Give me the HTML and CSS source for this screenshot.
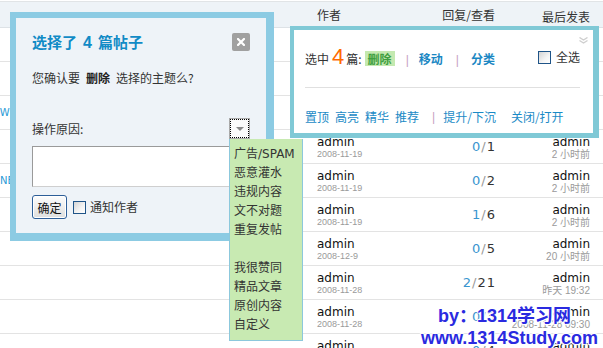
FILE: index.html
```html
<!DOCTYPE html>
<html lang="zh-CN">
<head>
    <meta charset="UTF-8">
    <meta name="viewport" content="width=device-width, initial-scale=1.0">
    <title>批量管理 - 删除主题</title>
    <link rel="stylesheet" href="styles.css">
</head>
<body>

    <!-- 主题列表 -->
    <div class="threadlist">
        <div class="th">
            <span></span>
            <span>作者</span>
            <span class="num">回复/查看</span>
            <span class="last">最后发表</span>
        </div>
        <div class="tr">
            <div class="subject"></div>
            <div class="author"><cite>admin</cite><em>2008-11-19</em></div>
            <div class="nums"><b>0</b>/<i>3</i></div>
            <div class="last"><cite>admin</cite><em>2 小时前</em></div>
        </div>
        <div class="tr">
            <div class="subject"></div>
            <div class="author"><cite>admin</cite><em>2008-11-19</em></div>
            <div class="nums"><b>0</b>/<i>4</i></div>
            <div class="last"><cite>admin</cite><em>2 小时前</em></div>
        </div>
        <div class="tr">
            <div class="subject"><span class="tag cut">NEW</span></div>
            <div class="author"><cite>admin</cite><em>2008-11-19</em></div>
            <div class="nums"><b>0</b>/<i>2</i></div>
            <div class="last"><cite>admin</cite><em>2 小时前</em></div>
        </div>
        <div class="tr">
            <div class="subject"></div>
            <div class="author"><cite>admin</cite><em>2008-11-19</em></div>
            <div class="nums"><b>0</b>/<i>1</i></div>
            <div class="last"><cite>admin</cite><em>2 小时前</em></div>
        </div>
        <div class="tr">
            <div class="subject"><span class="tag">NEW</span></div>
            <div class="author"><cite>admin</cite><em>2008-11-19</em></div>
            <div class="nums"><b>0</b>/<i>2</i></div>
            <div class="last"><cite>admin</cite><em>2 小时前</em></div>
        </div>
        <div class="tr">
            <div class="subject"></div>
            <div class="author"><cite>admin</cite><em>2008-11-19</em></div>
            <div class="nums"><b>1</b>/<i>6</i></div>
            <div class="last"><cite>admin</cite><em>2 小时前</em></div>
        </div>
        <div class="tr">
            <div class="subject"></div>
            <div class="author"><cite>admin</cite><em>2008-12-9</em></div>
            <div class="nums"><b>0</b>/<i>5</i></div>
            <div class="last"><cite>admin</cite><em>20 小时前</em></div>
        </div>
        <div class="tr">
            <div class="subject"></div>
            <div class="author"><cite>admin</cite><em>2008-11-28</em></div>
            <div class="nums"><b>2</b>/<i>21</i></div>
            <div class="last"><cite>admin</cite><em>昨天 19:32</em></div>
        </div>
        <div class="tr">
            <div class="subject"></div>
            <div class="author"><cite>admin</cite><em>2008-11-28</em></div>
            <div class="nums"><b>0</b>/<i>3</i></div>
            <div class="last"><cite>admin</cite><em>2008-11-28 09:30</em></div>
        </div>
        <div class="tr">
            <div class="subject"></div>
            <div class="author"><cite>admin</cite><em>2008-11-28</em></div>
            <div class="nums"><b>0</b>/<i>4</i></div>
            <div class="last"><cite>admin</cite><em>2008-11-28 09:12</em></div>
        </div>
    </div>

    <!-- 删除确认对话框 -->
    <div class="dialog">
        <div class="dialog-title">
            <h3>选择了<span class="count">4</span>篇帖子</h3>
            <a class="close">
                <svg width="8" height="8" viewBox="0 0 8 8"><path d="M1 1L7 7M7 1L1 7" stroke="#fff" stroke-width="2.2" stroke-linecap="square"/></svg>
            </a>
        </div>
        <p class="confirm">您确认要<strong>删除</strong>选择的主题么?</p>
        <div class="reason-head">
            <label>操作原因:</label>
            <div class="reason-select">
                <span class="arrow"></span>
                <ul class="reason-menu">
                    <li>广告/SPAM</li>
                    <li>恶意灌水</li>
                    <li>违规内容</li>
                    <li>文不对题</li>
                    <li>重复发帖</li>
                    <li></li>
                    <li>我很赞同</li>
                    <li>精品文章</li>
                    <li>原创内容</li>
                    <li>自定义</li>
                </ul>
            </div>
        </div>
        <textarea class="reason"></textarea>
        <div class="dialog-foot">
            <button class="btn">确定</button>
            <span class="check"></span>
            <label>通知作者</label>
        </div>
    </div>

    <!-- 管理面板 -->
    <div class="modpanel">
        <span class="fold">
            <svg width="9" height="7" viewBox="0 0 9 7"><path d="M0.5 0.5L4.5 3L8.5 0.5M0.5 3.5L4.5 6L8.5 3.5" fill="none" stroke="#cfcfcf" stroke-width="1.4"/></svg>
        </span>
        <div class="mod-row">
            <span>选中</span><strong class="big">4</strong><span>篇:</span>
            <a class="act on">删除</a><span class="sep">|</span><a class="act">移动</a><span class="sep wide">|</span><a class="act">分类</a>
            <label class="all"><span class="check"></span>全选</label>
        </div>
        <div class="mod-line"></div>
        <div class="mod-row2">
            <a>置顶</a><a>高亮</a><a>精华</a><a>推荐</a><span class="sep">|</span><a>提升/下沉</a><a class="gap">关闭/打开</a>
        </div>
    </div>

    <!-- 水印 -->
    <div class="watermark">
        <div class="by">by：1314学习网</div>
        <div>www.1314Study.com</div>
    </div>

</body>
</html>
```

FILE: styles.css
```css
/* Estilos generales */
html, body {
    margin: 0;
    padding: 0;
    overflow: hidden;
}

body {
    font-family: "DejaVu Sans", "Noto Sans CJK SC", sans-serif;
    font-size: 12px;
    color: #333;
    background-color: #fff;
    position: relative;
    width: 603px;
    height: 348px;
}

a {
    cursor: pointer;
}

/* Lista de temas */
.threadlist {
    padding-top: 1px;
}

.th, .tr {
    display: grid;
    grid-template-columns: 317px 1fr 70px 95px;
    padding-right: 13px;
}

.th {
    height: 25px;
    align-items: center;
    background-color: #eef3f7;
    border-top: 1px solid #e1e4e6;
    border-bottom: 1px solid #dde2e6;
    line-height: 16px;
    font-family: "Noto Sans CJK SC", sans-serif;
}

.th .num, .th .last {
    text-align: right;
}

.tr {
    height: 33px;
    border-bottom: 1px solid #e3e3e3;
}

.subject {
    align-self: center;
    line-height: 12px;
}

.tag {
    font-size: 10px;
    color: #2a9ad6;
}

.tag.cut {
    margin-left: -14px;
}

.author, .last {
    padding-top: 5px;
}

.tr cite {
    display: block;
    font-style: normal;
    font-size: 12px;
    line-height: 14px;
    color: #111;
}

.author em {
    display: block;
    font-style: normal;
    font-family: "Liberation Sans", sans-serif;
    font-size: 9px;
    line-height: 11px;
    color: #9a9a9a;
}

.last {
    text-align: right;
}

.last em {
    display: block;
    font-style: normal;
    font-family: "Liberation Sans", "Noto Sans CJK SC", sans-serif;
    font-size: 10px;
    line-height: 12px;
    color: #9a9a9a;
}

.nums {
    align-self: center;
    text-align: right;
    font-size: 13px;
    line-height: 16px;
    letter-spacing: 1px;
    margin-right: -1px;
    color: #999;
}

.nums b {
    font-weight: normal;
    color: #3a95cf;
}

.nums i {
    font-style: normal;
    color: #333;
}

/* Dialogo de confirmacion */
.dialog {
    position: absolute;
    left: 10px;
    top: 12px;
    width: 264px;
    height: 229px;
    box-sizing: border-box;
    border-style: solid;
    border-color: #8ccbe3;
    border-width: 6px 8px 8px 6px;
    background-color: #eef3f8;
    padding: 14px 16px 0 16px;
    font-family: "Noto Sans CJK SC", sans-serif;
    z-index: 2;
}

.dialog-title {
    display: flex;
    justify-content: space-between;
    align-items: center;
    height: 20px;
}

.dialog-title h3 {
    margin: 0;
    font-size: 15px;
    line-height: 20px;
    font-weight: bold;
    color: #118bc6;
}

.dialog-title .count {
    font-family: "Liberation Sans", sans-serif;
    font-size: 16px;
    margin: 0 6px;
}

.close {
    width: 18px;
    height: 18px;
    border-radius: 2px;
    background-color: #a0a0a0;
    display: flex;
    align-items: center;
    justify-content: center;
}

.confirm {
    margin: 17px 0 0;
    line-height: 18px;
    color: #333;
}

.confirm strong {
    margin: 0 6px;
    color: #222;
}

.reason-head {
    margin-top: 31px;
    height: 21px;
    display: flex;
    justify-content: space-between;
    align-items: center;
}

.reason-head label {
    line-height: 16px;
}

.reason-select {
    position: relative;
    width: 21px;
    height: 21px;
    box-sizing: border-box;
    border: 1px solid #a9a9a9;
    background-color: #fbfbfb;
}

.reason-select::before {
    content: "";
    position: absolute;
    inset: 0;
    border: 1px dotted #000;
}

.arrow {
    position: absolute;
    left: 6px;
    top: 8px;
    border-top: 4px solid #8a8a8a;
    border-left: 4px solid transparent;
    border-right: 4px solid transparent;
}

.reason-menu {
    position: absolute;
    top: 20px;
    left: -1px;
    width: 74px;
    box-sizing: border-box;
    margin: 0;
    padding: 6px 0 5px 4px;
    list-style: none;
    background-color: #c8eab2;
    border: 1px solid #8cc8dc;
    border-top: none;
}

.reason-menu li {
    height: 19px;
    line-height: 19px;
    white-space: nowrap;
    color: #333;
    font-family: "DejaVu Sans", "Noto Sans CJK SC", sans-serif;
}

.reason {
    display: block;
    margin: 7px 0 0;
    width: 218px;
    height: 41px;
    box-sizing: border-box;
    border: 1px solid;
    border-color: #9a9a9a #cfcfcf #cfcfcf #9a9a9a;
    background-color: #fff;
    padding: 0;
    resize: none;
}

.dialog-foot {
    margin-top: 8px;
    height: 24px;
    display: flex;
    align-items: center;
}

.btn {
    width: 35px;
    height: 24px;
    padding: 0;
    border: 1px solid #2d5e98;
    border-radius: 3px;
    background: linear-gradient(#fdfdfd, #dedede);
    box-shadow: inset 0 0 0 1px #fff;
    font-family: "Noto Sans CJK SC", sans-serif;
    font-size: 12px;
    color: #111;
}

.check {
    display: inline-block;
    width: 13px;
    height: 13px;
    box-sizing: border-box;
    border: 1px solid #1f5488;
    background: linear-gradient(135deg, #d4d4d4, #f4f4f4 60%, #fff);
}

.dialog-foot .check {
    margin-left: 6px;
}

.dialog-foot label {
    margin-left: 4px;
    line-height: 16px;
}

/* Panel de gestion */
.modpanel {
    position: absolute;
    left: 290px;
    top: 26px;
    width: 309px;
    height: 112px;
    box-sizing: border-box;
    border-style: solid;
    border-color: #80c9d6;
    border-width: 4px 6px 5px 4px;
    background-color: #fff;
    padding: 17px 13px 0 11px;
    font-family: "Noto Sans CJK SC", sans-serif;
    z-index: 2;
}

.fold {
    position: absolute;
    top: 7px;
    right: 5px;
    line-height: 0;
}

.mod-row {
    display: flex;
    align-items: baseline;
    height: 20px;
    line-height: 20px;
}

.big {
    font-family: "Liberation Sans", sans-serif;
    font-weight: normal;
    font-size: 22px;
    color: #ff6a00;
    margin: 0 2px 0 3px;
}

.act {
    font-weight: bold;
    color: #1a87c3;
}

.act.on {
    margin-left: 3px;
    padding: 1px 3px;
    line-height: 13px;
    background-color: #c4e9b0;
    color: #3f9f3f;
}

.sep {
    font-family: "Liberation Sans", sans-serif;
    color: #c7a1c2;
    margin: 0 10px 0 11px;
}

.sep.wide {
    margin: 0 12px 0 13px;
}

.all {
    margin-left: auto;
    display: flex;
    align-items: center;
    align-self: center;
}

.all .check {
    margin-right: 5px;
}

.mod-line {
    margin-top: 20px;
    height: 1px;
    background-color: #e0e0e0;
}

.mod-row2 {
    margin-top: 22px;
    display: flex;
    line-height: 14px;
}

.mod-row2 a {
    color: #1a8ac6;
    margin-right: 6px;
}

.mod-row2 .sep {
    margin: 0 8px 0 7px;
}

.mod-row2 .gap {
    margin-left: 9px;
}

/* Marca de agua */
.watermark {
    position: absolute;
    left: 421px;
    top: 305px;
    font-family: "Liberation Sans", "Noto Sans CJK SC", sans-serif;
    font-weight: bold;
    font-size: 18px;
    line-height: 22px;
    white-space: nowrap;
    color: #2a2ae0;
    text-shadow: 1px 1px 1px #fff, -1px -1px 1px #fff, 1px -1px 1px #fff, -1px 1px 1px #fff;
    z-index: 3;
}

.watermark .by {
    padding-left: 17px;
}
```
